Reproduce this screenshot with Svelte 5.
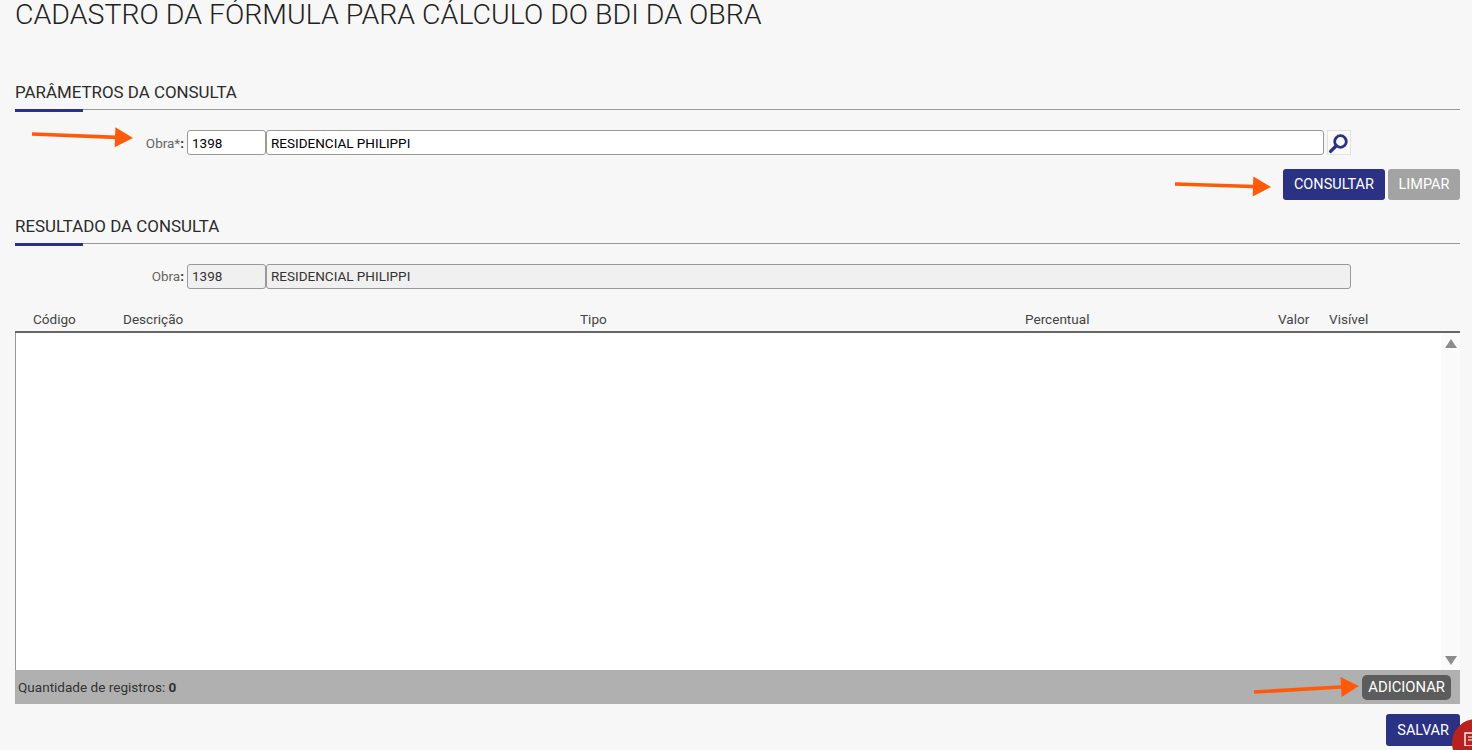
<script lang="ts">
  const columns = ["Código", "Descrição", "Tipo", "Percentual", "Valor", "Visível"];
  const obra = { codigo: "1398", nome: "RESIDENCIAL PHILIPPI" };

  // annotation arrows drawn on top of the screenshot: x1, y1, x2, y2
  const arrows = [
    [32, 134, 133, 138],
    [1175, 184, 1271, 187],
    [1254, 692, 1359, 686],
  ];
</script>

<main class="page">
  <h1>CADASTRO DA FÓRMULA PARA CÁLCULO DO BDI DA OBRA</h1>

  <section class="params">
    <h2>PARÂMETROS DA CONSULTA</h2>
    <div class="field-row">
      <label for="obra-cod">Obra*<b>:</b></label>
      <input id="obra-cod" class="cod" value={obra.codigo} />
      <input class="nome" value={obra.nome} />
      <button class="lookup" aria-label="Pesquisar">
        <svg width="22" height="22" viewBox="0 0 22 22">
          <circle cx="12.5" cy="9.5" r="5.8" fill="none" stroke="#2b3183" stroke-width="2.8" />
          <path d="M8 14 2.6 19.4" stroke="#2b3183" stroke-width="3.4" stroke-linecap="round" />
        </svg>
      </button>
    </div>
    <div class="actions">
      <button class="btn primary">CONSULTAR</button>
      <button class="btn muted">LIMPAR</button>
    </div>
  </section>

  <section class="result">
    <h2>RESULTADO DA CONSULTA</h2>
    <div class="field-row readonly">
      <label for="res-cod">Obra<b>:</b></label>
      <input id="res-cod" class="cod" value={obra.codigo} readonly />
      <input class="nome" value={obra.nome} readonly />
    </div>

    <div class="table">
      <div class="thead">
        {#each columns as col}
          <span>{col}</span>
        {/each}
      </div>
      <div class="tbody">
        <div class="rows"></div>
        <div class="scrollbar">
          <i class="tri up"></i>
          <i class="tri down"></i>
        </div>
      </div>
      <div class="tfoot">
        <span>Quantidade de registros: <b>0</b></span>
        <button class="btn dark">ADICIONAR</button>
      </div>
    </div>
    <div class="save">
      <button class="btn primary">SALVAR</button>
    </div>
  </section>
</main>

<svg class="overlay" width="1472" height="750" aria-hidden="true">
  {#each arrows as [x1, y1, x2, y2]}
    <line {x1} {y1} x2={x2 - 10} y2={y2 - ((y2 - y1) * 10) / (x2 - x1)} stroke="#ff5a0a" stroke-width="3.6" />
    <polygon
      points={`${x2 - 18},${y2 - 10} ${x2},${y2} ${x2 - 18},${y2 + 10}`}
      transform={`rotate(${(Math.atan2(y2 - y1, x2 - x1) * 180) / Math.PI} ${x2} ${y2})`}
      fill="#ff5a0a"
    />
  {/each}
</svg>

<div class="chat-badge">
  <svg width="16" height="16" viewBox="0 0 16 16">
    <rect x="3" y="3" width="11" height="13" fill="#b8211d" stroke="#fff" stroke-width="1.4" />
    <path d="M6 7h5M6 10h5" stroke="#fff" stroke-width="1.2" />
  </svg>
</div>

<style>
  :global(body) { margin: 0; background: #f7f7f7; overflow: hidden; }
  .page { height: 750px; box-sizing: border-box; padding: 0 12px 0 15px; font-family: Roboto, "Liberation Sans", sans-serif; color: #333; }
  h1 { margin: 0; height: 82px; font-size: 28.5px; line-height: 29px; font-weight: 300; color: #222; }
  h2 { position: relative; margin: 0; height: 27px; font-size: 16.9px; line-height: 20px; font-weight: 400; color: #2b2b2b; border-bottom: 1px solid #999; }
  h2::after { content: ""; position: absolute; left: 0; bottom: -3px; width: 68px; height: 3px; background: #2b3183; }

  .field-row { display: flex; align-items: center; height: 25px; margin-top: 20px; }
  .field-row label { width: 169px; margin-right: 3px; text-align: right; font-size: 13.5px; color: #666; }
  .field-row label b { color: #333; }
  input { box-sizing: border-box; height: 25px; padding: 0 4px; border: 1px solid #999; border-radius: 3px; background: #fff; color: #000; font: 13.5px Roboto, "Liberation Sans", sans-serif; outline: none; }
  .cod { width: 79px; }
  .nome { width: 1058px; }
  .readonly label { padding-bottom: 2px; }
  .readonly input { padding-bottom: 2px; background: #f0f0f0; color: #333; }
  .readonly .nome { width: 1085px; }
  .lookup { width: 24px; height: 25px; margin-left: 3px; padding: 0; display: flex; align-items: center; justify-content: center; background: #fafafa; border: 1px solid #e2e2e2; }

  .actions { display: flex; justify-content: flex-end; gap: 3px; margin-top: 14px; }
  .btn { height: 31px; padding: 0 11px; border: 0; border-radius: 3px; color: #fff; font: 400 14.5px Roboto, "Liberation Sans", sans-serif; }
  .primary { background: #2b3183; }
  .muted { padding: 0 10.5px; background: #a3a3a3; }
  .dark { height: 25px; padding: 0 6px; background: #5c5c5c; border-radius: 5px; font-size: 14.8px; }

  .result { margin-top: 16px; }

  .table { margin-top: 20px; }
  .thead { display: grid; grid-template-columns: 90px 457px 445px 253px 51px 1fr; box-sizing: border-box; height: 24px; padding-left: 18px; border-bottom: 2px solid #666; font-size: 13.55px; line-height: 21px; color: #444; }
  .tbody { display: flex; height: 337px; background: #fff; border-left: 1px solid #999; }
  .rows { flex: 1; }
  .scrollbar { width: 19px; display: flex; flex-direction: column; justify-content: space-between; align-items: center; padding: 6px 0 5px; box-sizing: border-box; background: #fafafa; }
  .tri { width: 0; height: 0; border-left: 6.5px solid transparent; border-right: 6.5px solid transparent; }
  .tri.up { border-bottom: 9px solid #8c8c8c; }
  .tri.down { border-top: 9px solid #8c8c8c; }
  .tfoot { display: flex; align-items: center; justify-content: space-between; height: 34px; padding: 0 9px 0 3px; background: #b0b0b0; font-size: 13.55px; color: #333; }
  .tfoot b { font-weight: 700; }
  .save { display: flex; justify-content: flex-end; margin-top: 10px; }
  .save .btn { height: 32px; }

  .overlay { position: absolute; left: 0; top: 0; pointer-events: none; }
  .chat-badge { position: absolute; left: 1452px; top: 719px; width: 48px; height: 48px; padding: 11px 0 0 10px; box-sizing: border-box; border-radius: 50%; background: #b8211d; }
</style>
